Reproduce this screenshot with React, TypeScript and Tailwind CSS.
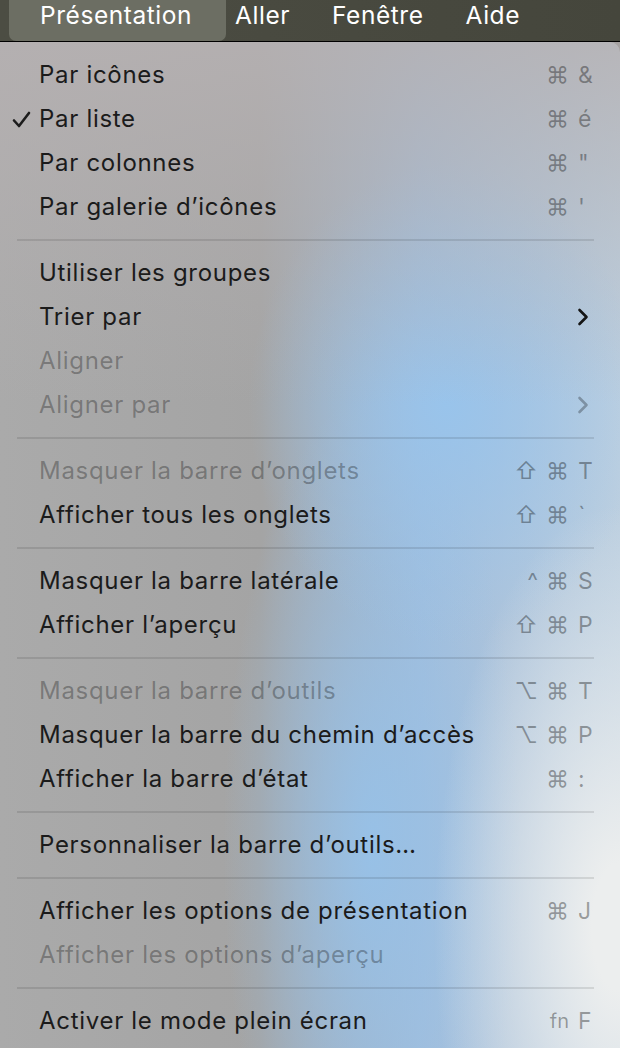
import React from 'react';

type Item = {
  label: string;
  keys?: string[];
  disabled?: boolean;
  checked?: boolean;
  submenu?: boolean;
};

const sections: Item[][] = [
  [
    { label: 'Par icônes', keys: ['⌘', '&'] },
    { label: 'Par liste', keys: ['⌘', 'é'], checked: true },
    { label: 'Par colonnes', keys: ['⌘', '"'] },
    { label: 'Par galerie d’icônes', keys: ['⌘', "'"] },
  ],
  [
    { label: 'Utiliser les groupes' },
    { label: 'Trier par', submenu: true },
    { label: 'Aligner', disabled: true },
    { label: 'Aligner par', disabled: true, submenu: true },
  ],
  [
    { label: 'Masquer la barre d’onglets', keys: ['⇧', '⌘', 'T'], disabled: true },
    { label: 'Afficher tous les onglets', keys: ['⇧', '⌘', '`'] },
  ],
  [
    { label: 'Masquer la barre latérale', keys: ['^', '⌘', 'S'] },
    { label: 'Afficher l’aperçu', keys: ['⇧', '⌘', 'P'] },
  ],
  [
    { label: 'Masquer la barre d’outils', keys: ['⌥', '⌘', 'T'], disabled: true },
    { label: 'Masquer la barre du chemin d’accès', keys: ['⌥', '⌘', 'P'] },
    { label: 'Afficher la barre d’état', keys: ['⌘', ':'] },
  ],
  [{ label: 'Personnaliser la barre d’outils…' }],
  [
    { label: 'Afficher les options de présentation', keys: ['⌘', 'J'] },
    { label: 'Afficher les options d’aperçu', disabled: true },
  ],
  [{ label: 'Activer le mode plein écran', keys: ['fn', 'F'] }],
];

const Shortcut: React.FC<{ keys: string[] }> = ({ keys }) => {
  const mods = keys.slice(0, -1);
  const key = keys[keys.length - 1];
  return (
    <div className="flex items-center text-[23px] text-black/35">
      <div className="flex items-center gap-[8px]">
        {mods.map((m) => (
          <span key={m} className={m === 'fn' ? 'text-[20px]' : ''}>
            {m}
          </span>
        ))}
      </div>
      <span className="w-[17px] ml-[9px] text-left">{key}</span>
    </div>
  );
};

const Row: React.FC<{ item: Item }> = ({ item }) => (
  <div className="flex items-center h-[44px] pl-[12px] pr-[25px]">
    <div className="w-[27px] flex items-center">
      {item.checked && (
        <svg width="19" height="17" viewBox="0 0 19 17" fill="none">
          <path d="M2 9.5 L7 15 L17 2" stroke="#1c1c1c" strokeWidth="2.6" strokeLinecap="round" strokeLinejoin="round" />
        </svg>
      )}
    </div>
    <span
      className={`flex-1 text-[24px] tracking-[0.7px] ${item.disabled ? 'text-black/30' : 'text-[#1b1b1b]'}`}
    >
      {item.label}
    </span>
    {item.keys && <Shortcut keys={item.keys} />}
    {item.submenu && (
      <svg width="12" height="18" viewBox="0 0 12 18" fill="none" className="mr-[6px]">
        <path
          d="M2.5 2 L9.5 9 L2.5 16"
          stroke={item.disabled ? 'rgba(0,0,0,0.28)' : '#151515'}
          strokeWidth="2.6"
          strokeLinecap="round"
          strokeLinejoin="round"
        />
      </svg>
    )}
  </div>
);

const App: React.FC = () => {
  return (
    <div className="w-[620px] h-[1048px] overflow-hidden bg-[#4a4b41] font-['Inter','Noto_Sans',sans-serif]">
      <div className="h-[41px] flex items-stretch text-white text-[24.5px] tracking-[0.55px] bg-[linear-gradient(to_right,#4c4d43,#45463c)]">
        <div className="ml-[9px] w-[217px] rounded-b-[7px] bg-[#6c6e63] flex items-center pl-[31px] pb-[10px]">
          Présentation
        </div>
        <div className="flex items-center pb-[10px] pl-[9px] gap-[42px]">
          <span>Aller</span>
          <span>Fenêtre</span>
          <span>Aide</span>
        </div>
      </div>
      <div className="h-[1px] bg-black" />
      <div className="relative rounded-tr-[10px] pt-[11px] h-[1006px] bg-[radial-gradient(ellipse_30%_42%_at_100%_88%,rgba(236,238,238,1)_15%,rgba(236,238,238,0)_100%),radial-gradient(ellipse_32%_24%_at_72%_36%,rgba(152,196,236,0.95),rgba(152,196,236,0)_100%),radial-gradient(ellipse_24%_45%_at_60%_80%,rgba(150,194,234,0.9),rgba(150,194,234,0)_100%),linear-gradient(to_right,#aaaaaa_0%,#a4a4a4_42%,#a3bcd8_68%,#bccfe0_100%)]">
        <div className="absolute inset-0 bg-[linear-gradient(to_bottom,rgba(182,177,178,0.85)_0%,rgba(182,177,178,0.35)_20%,rgba(182,177,178,0)_36%)] pointer-events-none" />
        <div className="relative">
          {sections.map((sec, i) => (
            <div key={i}>
              {i > 0 && (
                <div className="h-[22px] flex items-center pl-[17px] pr-[26px]">
                  <div className="h-[2px] w-full bg-black/10" />
                </div>
              )}
              {sec.map((it) => (
                <Row key={it.label} item={it} />
              ))}
            </div>
          ))}
        </div>
      </div>
    </div>
  );
};

export default App;
